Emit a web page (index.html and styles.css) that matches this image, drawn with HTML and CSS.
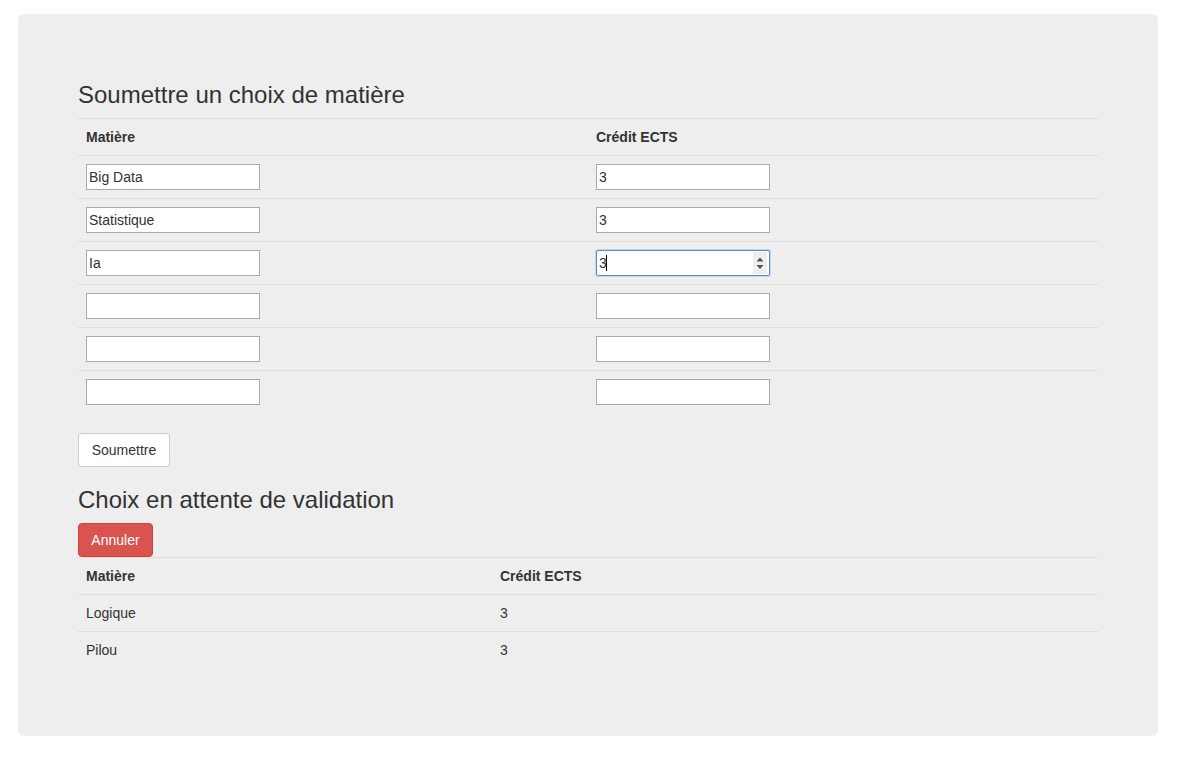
FILE: index.html
```html
<!DOCTYPE html>
<html lang="fr">
<head>
<meta charset="utf-8">
<title>Choix de matière</title>
<link rel="stylesheet" href="styles.css">
</head>
<body>
<div class="page">
  <div class="jumbotron">
    <h3>Soumettre un choix de matière</h3>
    <table class="table table-form">
      <tr><th class="col-a">Matière</th><th>Crédit ECTS</th></tr>
      <tr><td><input type="text" value="Big Data"></td><td><input type="text" value="3"></td></tr>
      <tr><td><input type="text" value="Statistique"></td><td><input type="text" value="3"></td></tr>
      <tr><td><input type="text" value="Ia"></td><td><span class="focus-wrap"><input class="focused" type="text" value="3"><span class="caret"></span><span class="spinner"><svg width="14" height="22" viewBox="0 0 14 22"><rect x="0" y="0" width="14" height="22" fill="#eeeeee"/><path d="M3.5 9.5 L7 5.5 L10.5 9.5 Z" fill="#505050"/><path d="M3.5 13 L7 17 L10.5 13 Z" fill="#505050"/></svg></span></span></td></tr>
      <tr><td><input type="text" value=""></td><td><input type="text" value=""></td></tr>
      <tr><td><input type="text" value=""></td><td><input type="text" value=""></td></tr>
      <tr><td><input type="text" value=""></td><td><input type="text" value=""></td></tr>
    </table>
    <button class="btn btn-default" type="button">Soumettre</button>
    <h3>Choix en attente de validation</h3>
    <button class="btn btn-danger" type="button">Annuler</button>
    <table class="table table-list">
      <tr><th class="col-b">Matière</th><th>Crédit ECTS</th></tr>
      <tr><td>Logique</td><td>3</td></tr>
      <tr><td>Pilou</td><td>3</td></tr>
    </table>
  </div>
</div>
</body>
</html>
```
FILE: styles.css
```css
html, body {
  margin: 0;
  padding: 0;
  background: #ffffff;
}
body {
  font-family: "Liberation Sans", Arial, sans-serif;
  font-size: 14px;
  line-height: 20px;
  color: #333333;
}
.page {
  padding: 14px 0 0 18px;
}
.jumbotron {
  width: 1140px;
  box-sizing: border-box;
  background: #eeeeee;
  border-radius: 6px;
  padding: 48px 60px;
}
h3 {
  font-size: 24px;
  font-weight: 500;
  line-height: 26px;
  margin: 20px 0 10px;
  color: #333333;
}
.table {
  width: 100%;
  border-collapse: collapse;
  border-spacing: 0;
  margin-bottom: 20px;
}
.table th, .table td {
  padding: 8px;
  border-top: 1px solid #dddddd;
  text-align: left;
  vertical-align: top;
  line-height: 20px;
}
.table th {
  font-weight: bold;
}
.col-a { width: 494px; }
.col-b { width: 398px; }
input {
  font: inherit;
  color: inherit;
  margin: 0;
  width: 174px;
  height: 26px;
  box-sizing: border-box;
  border: 1px solid #a9a9a9;
  border-radius: 0;
  padding: 2px 2px;
  background: #ffffff;
  line-height: 20px;
  display: block;
  outline: none;
}
.focus-wrap {
  position: relative;
  display: block;
  width: 174px;
}
input.focused {
  border: 1px solid #5a8ad9;
  border-radius: 2px;
  box-shadow: 0 0 0 1px rgba(120, 160, 230, 0.35);
}
.caret {
  position: absolute;
  left: 10px;
  top: 5px;
  width: 1px;
  height: 16px;
  background: #000000;
}
.spinner {
  position: absolute;
  right: 3px;
  top: 2px;
  width: 14px;
  height: 22px;
}
.spinner svg { display: block; }
.btn {
  display: inline-block;
  font: inherit;
  font-size: 14px;
  line-height: 20px;
  padding: 6px 12px;
  border: 1px solid transparent;
  border-radius: 4px;
  margin: 0;
  cursor: pointer;
  vertical-align: middle;
}
.btn-default {
  color: #333333;
  background: #ffffff;
  border-color: #cccccc;
  padding: 6px 12px 6px 12px;
  width: 92px;
}
.btn-danger {
  color: #ffffff;
  background: #d9534f;
  border-color: #d43f3a;
  display: block;
  width: 75px;
}
```
